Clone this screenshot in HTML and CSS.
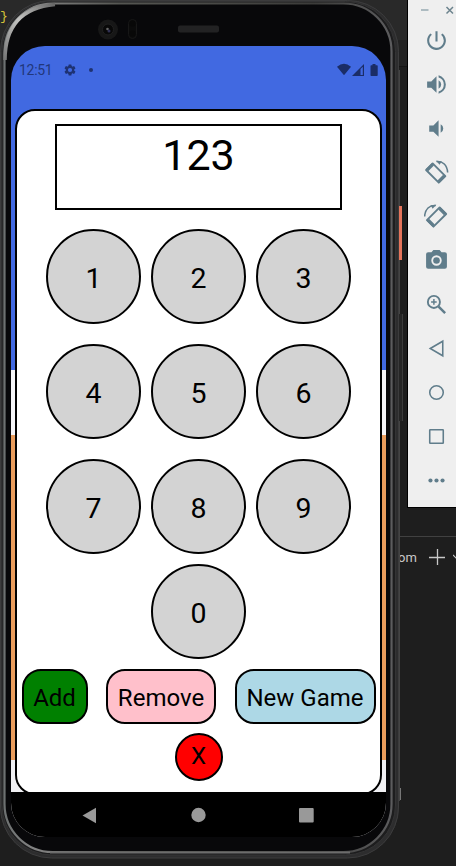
FILE: index.html
```html
<!DOCTYPE html>
<html lang="en">
<head>
<meta charset="utf-8">
<title>Keypad</title>
<link rel="stylesheet" href="styles.css">
</head>
<body>
<div class="desktop">
  <div class="editor-top"><span class="brace">}</span></div>
  <div class="editor-bar"><span>om</span>
    <svg class="plus" width="17" height="17" viewBox="0 0 17 17"><path d="M8.5 0v16M0 8.5h16" stroke="#c8c8c8" stroke-width="1.3"/></svg>
    <svg width="10" height="8" viewBox="0 0 10 8"><path d="M0 1l5 5 5-5" fill="none" stroke="#c8c8c8" stroke-width="1.2"/></svg>
  </div>

  <div class="phone">
    <svg class="frame" width="404" height="866" viewBox="0 0 404 866">
      <defs>
        <linearGradient id="rim" x1="0" y1="0" x2="1" y2="0">
          <stop offset="0" stop-color="#6d7171"/><stop offset=".08" stop-color="#838383"/><stop offset=".3" stop-color="#555652"/><stop offset=".8" stop-color="#3c3c3a"/><stop offset="1" stop-color="#5c5c5e"/>
        </linearGradient>
        <linearGradient id="shine" x1="0" y1="1" x2="1" y2="0">
          <stop offset="0" stop-color="#777"/><stop offset=".5" stop-color="#c4c4c2"/><stop offset="1" stop-color="#666"/>
        </linearGradient>
      </defs>
      <path d="M399.500 70v136M399.500 260v54M399.500 421v380" stroke="#444" stroke-width="1"/>
      <rect x="399" y="206" width="3" height="54" fill="#e5745b"/>
      <rect x="398" y="314" width="5" height="107" fill="#262626"/>
      <path d="M402.500 314v107" stroke="#3c3c3c"/>
      <path d="M400.500 788v12" stroke="#777"/>
      <rect x="0" y="0" width="399" height="858" rx="52" fill="#2d2d2e"/>
      <rect x=".5" y=".5" width="398" height="857.500" rx="51" fill="none" stroke="#3c3c3d"/>
      <rect x="2" y="1.500" width="393.500" height="853.500" rx="50" fill="#1d1d1e" stroke="#343435"/>
      <rect x="4.500" y="3.500" width="387" height="848.500" rx="48" fill="#08080a" stroke="url(#rim)" stroke-width="2.200"/>
      <path d="M5 60Q5 9 55 4.500" fill="none" stroke="url(#shine)" stroke-width="3.500"/>
      <path d="M50 852.500h300" stroke="#6c6c6c" stroke-width="2"/>
      <circle cx="108" cy="29.500" r="10" fill="#171717"/>
      <circle cx="108" cy="29.500" r="5.500" fill="#080808" stroke="#202020"/>
      <circle cx="107.500" cy="29" r="1.300" fill="#666"/><circle cx="109" cy="31" r="1.500" fill="#303052"/>
      <rect x="128.500" y="19.500" width="8" height="19" rx="4" fill="#0b0b0b" stroke="#171717"/>
      <circle cx="132.500" cy="23.500" r="3" fill="#080808"/><circle cx="132.500" cy="33.500" r="3" fill="#080808"/>
      <rect x="178" y="25.500" width="41" height="7" rx="2" fill="#222223"/>
    </svg>

    <div class="screen">
      <div class="status">
        <span class="clock">12:51</span>
        <svg class="gear" width="14" height="14" viewBox="0 0 24 24"><path fill="#1e3272" d="M19.14 12.94c.04-.3.06-.61.06-.94s-.02-.64-.07-.94l2.03-1.58a.49.49 0 0 0 .12-.61l-1.92-3.32a.49.49 0 0 0-.59-.22l-2.39.96c-.5-.38-1.03-.7-1.62-.94L14.4 2.810a.48.48 0 0 0-.48-.41h-3.840a.47.47 0 0 0-.47.41l-.36 2.540c-.59.24-1.130.57-1.620.94l-2.390-.96a.48.48 0 0 0-.59.22L2.740 8.870a.47.47 0 0 0 .12.61l2.030 1.580c-.05.3-.09.63-.09.94s.02.64.07.94l-2.030 1.580a.49.49 0 0 0-.12.61l1.920 3.320c.12.22.37.29.59.22l2.390-.96c.5.38 1.030.7 1.620.94l.36 2.540c.05.24.24.41.48.41h3.840c.24 0 .44-.17.47-.41l.36-2.540c.59-.24 1.130-.56 1.620-.94l2.390.96c.22.08.47 0 .59-.22l1.920-3.320a.47.47 0 0 0-.12-.61zM12 15.600A3.600 3.600 0 1 1 12 8.400a3.600 3.600 0 0 1 0 7.200z"/></svg>
        <span class="dot"></span>
        <svg class="signals" width="42" height="14" viewBox="0 0 42 14"><g fill="#1b2d66"><path d="M0 3.800Q7-2.200 14 3.800L7 12.300z"/><path d="M15 13L27 1v12z"/><path d="M35.500 1h3v1.200h1.500q.7 0 .7.800v9.200q0 .8-.8.800h-5.600q-.8 0-.8-.8V3q0-.8.800-.8h1.200z"/></g><path d="M23.500 6l2.300-2.300v8.300h-2.300z" fill="#4169e1"/></svg>
      </div>
      <main class="card">
        <div class="display">123</div>
        <div class="keys">
          <button>1</button><button>2</button><button>3</button>
          <button>4</button><button>5</button><button>6</button>
          <button>7</button><button>8</button><button>9</button>
        </div>
        <div class="zero"><button>0</button></div>
        <div class="actions">
          <button class="add">Add</button>
          <button class="remove">Remove</button>
          <button class="new">New Game</button>
        </div>
        <button class="close">X</button>
      </main>
      <nav class="nav">
        <svg width="375" height="45" viewBox="0 0 375 45"><g fill="#999"><path d="M71.500 23.500L85 15.800v15.400z"/><circle cx="187.500" cy="23" r="7.200"/><rect x="288" y="16" width="14.700" height="14.500" rx="1"/></g></svg>
      </nav>
    </div>
  </div>

  <aside class="tools">
    <div class="window">
      <svg width="48" height="20" viewBox="0 0 48 20"><path d="M13 10h7.500" stroke="#a5b5bb" stroke-width="1.800"/><path d="M38.500 7l6.500 6.500M45 7l-6.500 6.500" stroke="#6c838d" stroke-width="1.500"/></svg>
    </div>
    <svg viewBox="0 0 24 24"><path d="M13 3h-2v10h2V3zm4.830 2.170l-1.420 1.420A6.920 6.920 0 0 1 19 12a7 7 0 1 1-11.420-5.420L6.170 5.170A8.930 8.930 0 0 0 3 12a9 9 0 1 0 14.830-6.830z"/></svg>
    <svg viewBox="0 0 24 24"><path d="M3 9v6h4l5 5V4L7 9H3zm13.500 3A4.500 4.500 0 0 0 14 7.970v8.050A4.470 4.470 0 0 0 16.500 12zM14 3.230v2.060a7 7 0 0 1 0 13.420v2.060a9 9 0 0 0 0-17.540z"/></svg>
    <svg viewBox="0 0 24 24"><path d="M18.500 12A4.500 4.500 0 0 0 16 7.970v8.050A4.470 4.470 0 0 0 18.500 12zM5 9v6h4l5 5V4L9 9H5z"/></svg>
    <svg viewBox="0 0 24 24"><g id="rotate"><g class="line"><path d="M8.300 3.300L2 9.600l12.200 12.200 6.300-6.300z" stroke-linejoin="round"/><path d="M8.500 4.300L3 9.800M19.500 15.300L14 20.800" stroke-width="3"/><path d="M12 1.500C18 .8 22.300 5 22.700 12" stroke-width="1.500"/></g><path d="M11.500 .8l5.500.4-2 3.300z"/></g></svg>
    <svg viewBox="0 0 24 24"><use href="#rotate" transform="translate(23.300 0) scale(-1 1)"/></svg>
    <svg viewBox="0 0 24 24"><circle cx="12" cy="12" r="3.200"/><path d="M9 2L7.170 4H4a2 2 0 0 0-2 2v12a2 2 0 0 0 2 2h16a2 2 0 0 0 2-2V6a2 2 0 0 0-2-2h-3.170L15 2H9zm3 15a5 5 0 1 1 0-10 5 5 0 0 1 0 10z"/></svg>
    <svg viewBox="0 0 24 24"><g class="line"><circle cx="9.500" cy="9.500" r="5.800"/><path d="M14 14l6.300 6.300" stroke-width="2.400"/><path d="M9.500 6.800v5.400M6.800 9.500h5.400" stroke-width="1.400"/></g></svg>
    <svg viewBox="0 0 24 24"><path class="thin" d="M6 12l12-7v14z"/></svg>
    <svg viewBox="0 0 24 24"><circle class="thin" cx="12" cy="12" r="6.500"/></svg>
    <svg viewBox="0 0 24 24"><rect class="thin" x="5.500" y="5.500" width="13" height="13" rx=".5"/></svg>
    <svg viewBox="0 0 24 24"><circle cx="6.200" cy="12" r="2"/><circle cx="12" cy="12" r="2"/><circle cx="17.800" cy="12" r="2"/></svg>
  </aside>
</div>
</body>
</html>
```
FILE: styles.css
```css
* { box-sizing: border-box; }
body { margin: 0; font-family: Roboto, sans-serif; overflow: hidden; }
svg { display: block; flex: none; }
button { font: inherit; color: #000; padding: 0; cursor: pointer; }

.desktop { position: relative; width: 456px; height: 866px; background: #1e1e1e; overflow: hidden; }
.editor-top { height: 67px; background: linear-gradient(#292929 0 40px, #222 40px 66px, #151515 66px); }
.brace { display: block; padding-top: 9px; font: 13px "Liberation Mono", monospace; color: #d6c43a; }
.editor-bar { display: flex; align-items: center; margin-top: 469px; height: 42px; border-top: 1px solid #414141; padding-left: 398px; color: #c8c8c8; font-size: 13px; }
.editor-bar span { width: 31px; flex: none; }
.plus { margin-right: 7px; }

.phone { position: absolute; left: 0; top: 0; width: 404px; height: 866px; padding: 46px 0 0 11px; }
.frame { position: absolute; left: 0; top: 0; }
.screen {
  position: relative; width: 375px; height: 791px; display: flex; flex-direction: column;
  border-radius: 34px; overflow: hidden;
  background: linear-gradient(#4169e1 0 324px, #f4f4f7 324px 389px, #e99c5c 389px 714px, #f0f0f3 714px);
}
.status { display: flex; align-items: center; height: 63px; flex: none; padding: 0 8px 15px; }
.clock { width: 43.5px; font-size: 14px; color: #21377b; letter-spacing: -.3px; }
.gear { margin-top: -1px; }
.dot { width: 4px; height: 4px; border-radius: 50%; background: #1e3272; margin-left: 12px; }
.signals { margin-left: auto; margin-right: -1px; }

.card {
  display: flex; flex-direction: column; align-items: center; flex: none;
  width: 367px; height: 686px; margin-left: 4px; padding-top: 13px;
  border: 2px solid #000; border-radius: 20px; background: #fff;
}
.display { width: 287px; height: 86px; flex: none; border: 2px solid #000; text-align: center; font-size: 43px; line-height: 58px; }
.keys { display: grid; grid-template-columns: repeat(3, 95px); column-gap: 10px; row-gap: 20px; margin-top: 19px; }
.keys button, .zero button { width: 95px; height: 95px; border: 2px solid #000; border-radius: 50%; background: #d3d3d3; font-size: 28.5px; padding-top: 3px; }
.zero { display: flex; margin-top: 10px; }
.actions { display: flex; justify-content: space-between; width: 354px; margin-top: 10px; }
.actions button { height: 55px; border: 2px solid #000; border-radius: 19px; font-size: 24px; padding-top: 3px; }
.actions .add { width: 66px; background: #008000; }
.actions .remove { width: 110px; background: #ffc0cb; }
.actions .new { width: 141px; background: #add8e6; }
.close { width: 48px; height: 48px; flex: none; margin-top: 9px; border: 2px solid #000; border-radius: 50%; background: #f00; font-size: 24px; line-height: 40px; padding-bottom: 2px; }
.nav { position: absolute; left: 0; bottom: 0; background: #000; }

.tools { position: absolute; right: 0; top: 0; width: 49px; height: 508px; background: #efefef; border: 1px solid #000; border-width: 0 0 1px 1px; display: flex; flex-direction: column; align-items: center; gap: 19px; }
.tools > svg { width: 25px; height: 25px; margin-left: 9px; fill: #607d8b; }
.window { height: 20px; margin-bottom: -11px; }
.line { fill: none; stroke: #607d8b; stroke-width: 1.8; }
.thin { fill: none; stroke: #607d8b; stroke-width: 1.5; }
```
